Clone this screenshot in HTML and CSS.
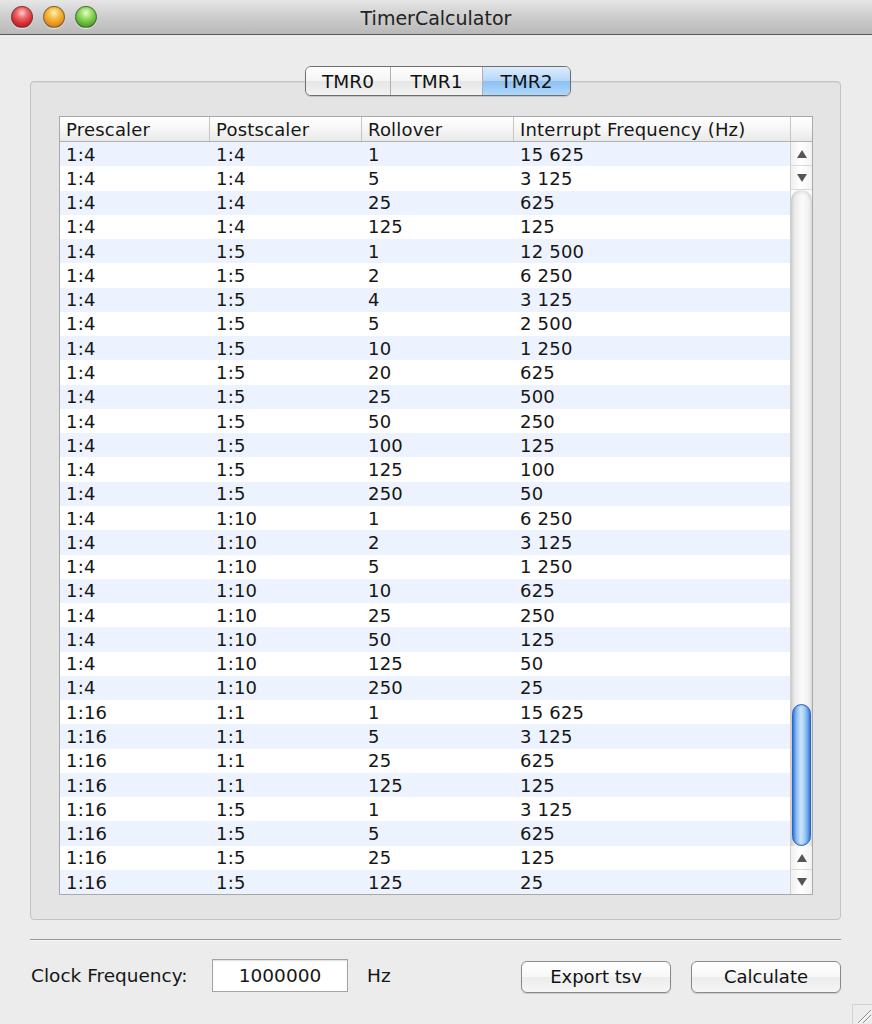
FILE: index.html
```html
<!DOCTYPE html>
<html>
<head>
<meta charset="utf-8">
<title>TimerCalculator</title>
<link rel="stylesheet" href="styles.css">
</head>
<body>
<div class="window">
  <div class="titlebar">
    <div class="lights">
      <span class="light red"></span>
      <span class="light yellow"></span>
      <span class="light green"></span>
    </div>
    <div class="title">TimerCalculator</div>
  </div>

  <div class="main">
    <div class="tabs">
      <div class="seg">TMR0</div>
      <div class="seg">TMR1</div>
      <div class="seg selected">TMR2</div>
    </div>

    <div class="panel">
      <div class="table">
        <div class="thead">
          <div class="th">Prescaler</div>
          <div class="th">Postscaler</div>
          <div class="th">Rollover</div>
          <div class="th">Interrupt Frequency (Hz)</div>
          <div class="th corner"></div>
        </div>
        <div class="tbody">
          <div class="rows" id="rows">
            <div class="row"><span>1:4</span><span>1:4</span><span>1</span><span>15 625</span></div>
            <div class="row"><span>1:4</span><span>1:4</span><span>5</span><span>3 125</span></div>
            <div class="row"><span>1:4</span><span>1:4</span><span>25</span><span>625</span></div>
            <div class="row"><span>1:4</span><span>1:4</span><span>125</span><span>125</span></div>
            <div class="row"><span>1:4</span><span>1:5</span><span>1</span><span>12 500</span></div>
            <div class="row"><span>1:4</span><span>1:5</span><span>2</span><span>6 250</span></div>
            <div class="row"><span>1:4</span><span>1:5</span><span>4</span><span>3 125</span></div>
            <div class="row"><span>1:4</span><span>1:5</span><span>5</span><span>2 500</span></div>
            <div class="row"><span>1:4</span><span>1:5</span><span>10</span><span>1 250</span></div>
            <div class="row"><span>1:4</span><span>1:5</span><span>20</span><span>625</span></div>
            <div class="row"><span>1:4</span><span>1:5</span><span>25</span><span>500</span></div>
            <div class="row"><span>1:4</span><span>1:5</span><span>50</span><span>250</span></div>
            <div class="row"><span>1:4</span><span>1:5</span><span>100</span><span>125</span></div>
            <div class="row"><span>1:4</span><span>1:5</span><span>125</span><span>100</span></div>
            <div class="row"><span>1:4</span><span>1:5</span><span>250</span><span>50</span></div>
            <div class="row"><span>1:4</span><span>1:10</span><span>1</span><span>6 250</span></div>
            <div class="row"><span>1:4</span><span>1:10</span><span>2</span><span>3 125</span></div>
            <div class="row"><span>1:4</span><span>1:10</span><span>5</span><span>1 250</span></div>
            <div class="row"><span>1:4</span><span>1:10</span><span>10</span><span>625</span></div>
            <div class="row"><span>1:4</span><span>1:10</span><span>25</span><span>250</span></div>
            <div class="row"><span>1:4</span><span>1:10</span><span>50</span><span>125</span></div>
            <div class="row"><span>1:4</span><span>1:10</span><span>125</span><span>50</span></div>
            <div class="row"><span>1:4</span><span>1:10</span><span>250</span><span>25</span></div>
            <div class="row"><span>1:16</span><span>1:1</span><span>1</span><span>15 625</span></div>
            <div class="row"><span>1:16</span><span>1:1</span><span>5</span><span>3 125</span></div>
            <div class="row"><span>1:16</span><span>1:1</span><span>25</span><span>625</span></div>
            <div class="row"><span>1:16</span><span>1:1</span><span>125</span><span>125</span></div>
            <div class="row"><span>1:16</span><span>1:5</span><span>1</span><span>3 125</span></div>
            <div class="row"><span>1:16</span><span>1:5</span><span>5</span><span>625</span></div>
            <div class="row"><span>1:16</span><span>1:5</span><span>25</span><span>125</span></div>
            <div class="row"><span>1:16</span><span>1:5</span><span>125</span><span>25</span></div>
          </div>
          <div class="sb">
            <div class="sb-btn"><span class="arr up"></span></div>
            <div class="sb-btn"><span class="arr down"></span></div>
            <div class="sb-track"><div class="sb-thumb"></div></div>
            <div class="sb-btn"><span class="arr up"></span></div>
            <div class="sb-btn"><span class="arr down"></span></div>
          </div>
        </div>
      </div>
    </div>

    <div class="separator"></div>

    <div class="bottom">
      <label class="label">Clock Frequency:</label>
      <div class="field">1000000</div>
      <span class="unit">Hz</span>
      <div class="buttons">
        <button class="btn">Export tsv</button>
        <button class="btn">Calculate</button>
      </div>
    </div>
  </div>

  <svg class="grip" width="20" height="20" viewBox="0 0 20 20">
    <path d="M0.5 20 V0.5 H20" fill="none" stroke="#d2d2d2"/>
    <path d="M6 19 L19 6 M11 19 L19 11" stroke="#8a8a8a" stroke-width="1"/>
    <path d="M7 19.5 L19.5 7 M12 19.5 L19.5 12" stroke="#ffffff" stroke-width="1"/>
  </svg>
</div>
</body>
</html>
```

FILE: styles.css
```css
* { box-sizing: border-box; }

html, body {
  margin: 0;
  padding: 0;
}

body {
  width: 872px;
  height: 1024px;
  background: #ececec;
  font-family: "DejaVu Sans", "Liberation Sans", sans-serif;
  color: #161616;
  overflow: hidden;
}

.window {
  position: relative;
  width: 872px;
  height: 1024px;
}

/* Title bar */
.titlebar {
  position: relative;
  height: 35px;
  background: linear-gradient(to bottom, #e6e6e6 0%, #cfcfcf 45%, #b9b9b9 100%);
  border-bottom: 1px solid #585858;
  display: flex;
  align-items: center;
  justify-content: center;
}

.lights {
  position: absolute;
  left: 11px;
  top: 6px;
  display: flex;
  gap: 10px;
}

.light {
  width: 22px;
  height: 22px;
  border-radius: 50%;
  border: 1px solid rgba(60, 60, 60, 0.55);
  box-shadow: 0 1px 1px rgba(255,255,255,0.6);
}

.light.red {
  background: radial-gradient(circle at 50% 30%, #ffd0d0 0%, #f06a6a 30%, #d42a2f 65%, #a51518 100%);
}
.light.yellow {
  background: radial-gradient(circle at 50% 30%, #fff0c0 0%, #f6c24a 30%, #e99321 65%, #b5650c 100%);
}
.light.green {
  background: radial-gradient(circle at 50% 30%, #e6ffc8 0%, #9ee06a 30%, #5fb435 65%, #3a7f19 100%);
}

.title {
  font-size: 19px;
  color: #222;
  padding-top: 1px;
}

/* Main */
.main {
  padding: 0 31px 0 30px;
}

.tabs {
  position: relative;
  z-index: 2;
  margin: 31px 0 0 275px;
  width: 266px;
  height: 30px;
  display: flex;
  border: 1px solid #6f6f6f;
  border-radius: 6px;
  overflow: hidden;
  box-shadow: 0 1px 1px rgba(0,0,0,0.15);
  font-size: 18.5px;
}

.seg {
  display: flex;
  align-items: center;
  justify-content: center;
  background: linear-gradient(to bottom, #ffffff 0%, #f4f4f4 50%, #e6e6e6 51%, #f2f2f2 100%);
  color: #111;
  border-right: 1px solid #b0b0b0;
}
.seg:nth-child(1) { width: 85px; }
.seg:nth-child(2) { width: 92px; }
.seg:nth-child(3) { flex: 1; border-right: none; }

.seg.selected {
  background: linear-gradient(to bottom, #dcecfc 0%, #b4d6f8 50%, #8cc0f2 51%, #b0d8fb 100%);
}

.panel {
  position: relative;
  z-index: 1;
  margin-top: -15px;
  height: 839px;
  background: #e4e4e4;
  border: 1px solid #c3c3c3;
  border-radius: 4px;
  box-shadow: inset 0 1px 0 #d8d8d8;
  padding: 34px 27px 0 28px;
}

/* Table */
.table {
  width: 754px;
  height: 779px;
  border: 1px solid #a9a9a9;
  background: #fff;
  display: flex;
  flex-direction: column;
}

.thead {
  height: 25px;
  display: grid;
  grid-template-columns: 150px 152px 152px 277px 1fr;
  background: linear-gradient(to bottom, #ffffff 0%, #f6f6f6 50%, #e9e9e9 100%);
  border-bottom: 1px solid #b3b3b3;
  font-size: 18px;
  letter-spacing: 0.2px;
}

.th {
  padding-left: 6px;
  border-right: 1px solid #c6c6c6;
  display: flex;
  align-items: center;
  white-space: nowrap;
}
.th.corner { border-right: none; }

.tbody {
  flex: 1;
  display: flex;
  min-height: 0;
}

.rows {
  flex: 1;
  display: flex;
  flex-direction: column;
}

.row {
  flex: 1;
  display: grid;
  grid-template-columns: 150px 152px 152px 1fr;
  align-items: center;
  font-size: 18px;
  letter-spacing: 0.2px;
  background: #fff;
}
.row:nth-child(odd) { background: #edf3fe; }
.row span {
  padding-left: 6px;
  white-space: nowrap;
}

/* Scrollbar */
.sb {
  width: 22px;
  border-left: 1px solid #cfcfcf;
  display: flex;
  flex-direction: column;
  background: #fafafa;
}

.sb-btn {
  height: 24px;
  display: flex;
  align-items: center;
  justify-content: center;
  background: linear-gradient(to right, #f0f0f0 0%, #ffffff 45%, #f2f2f2 100%);
  border-bottom: 1px solid #dadada;
}
.sb-btn:last-child { border-bottom: none; }

.arr {
  width: 0;
  height: 0;
  border-left: 5px solid transparent;
  border-right: 5px solid transparent;
}
.arr.up { border-bottom: 8px solid #555; }
.arr.down { border-top: 8px solid #555; }

.sb-track {
  flex: 1;
  display: flex;
  flex-direction: column;
  justify-content: flex-end;
  background: linear-gradient(to right, #d2d2d2 0%, #ececec 20%, #fbfbfb 55%, #f3f3f3 80%, #e0e0e0 100%);
  border-radius: 10px 10px 0 0;
  box-shadow: inset 0 3px 3px rgba(0,0,0,0.08);
}

.sb-thumb {
  height: 142px;
  margin: 0 1px;
  border-radius: 10px;
  border: 1px solid #2866c8;
  background: linear-gradient(to right, #3e80de 0%, #8dbff2 22%, #c9e2fa 45%, #b6d8f8 60%, #7fb5ef 80%, #3f82df 100%);
  box-shadow: inset 0 0 2px rgba(20, 70, 170, 0.5);
}

/* Bottom */
.separator {
  margin-top: 19px;
  height: 2px;
  border-top: 1px solid #959595;
  border-bottom: 1px solid #f8f8f8;
}

.bottom {
  margin-top: 17px;
  display: flex;
  align-items: center;
  height: 34px;
  font-size: 18.5px;
}

.label {
  padding-left: 1px;
  color: #161616;
  width: 182px;
  white-space: nowrap;
}

.field {
  width: 136px;
  height: 33px;
  background: #fff;
  border: 1px solid #a3a3a3;
  box-shadow: inset 0 1px 1px rgba(0,0,0,0.12);
  display: flex;
  align-items: center;
  justify-content: center;
  font-size: 18.5px;
}

.unit {
  margin-left: 19px;
}

.buttons {
  margin-left: auto;
  display: flex;
  gap: 20px;
  padding-top: 3px;
}

.btn {
  width: 150px;
  height: 32px;
  font-family: "DejaVu Sans", "Liberation Sans", sans-serif;
  font-size: 18px;
  color: #111;
  background: linear-gradient(to bottom, #ffffff 0%, #f7f7f7 50%, #ececec 51%, #f6f6f6 100%);
  border: 1px solid #8a8a8a;
  border-radius: 6px;
  box-shadow: 0 1px 1px rgba(0,0,0,0.15);
  padding: 0;
}

.grip {
  position: absolute;
  right: 0;
  bottom: 0;
}
```
